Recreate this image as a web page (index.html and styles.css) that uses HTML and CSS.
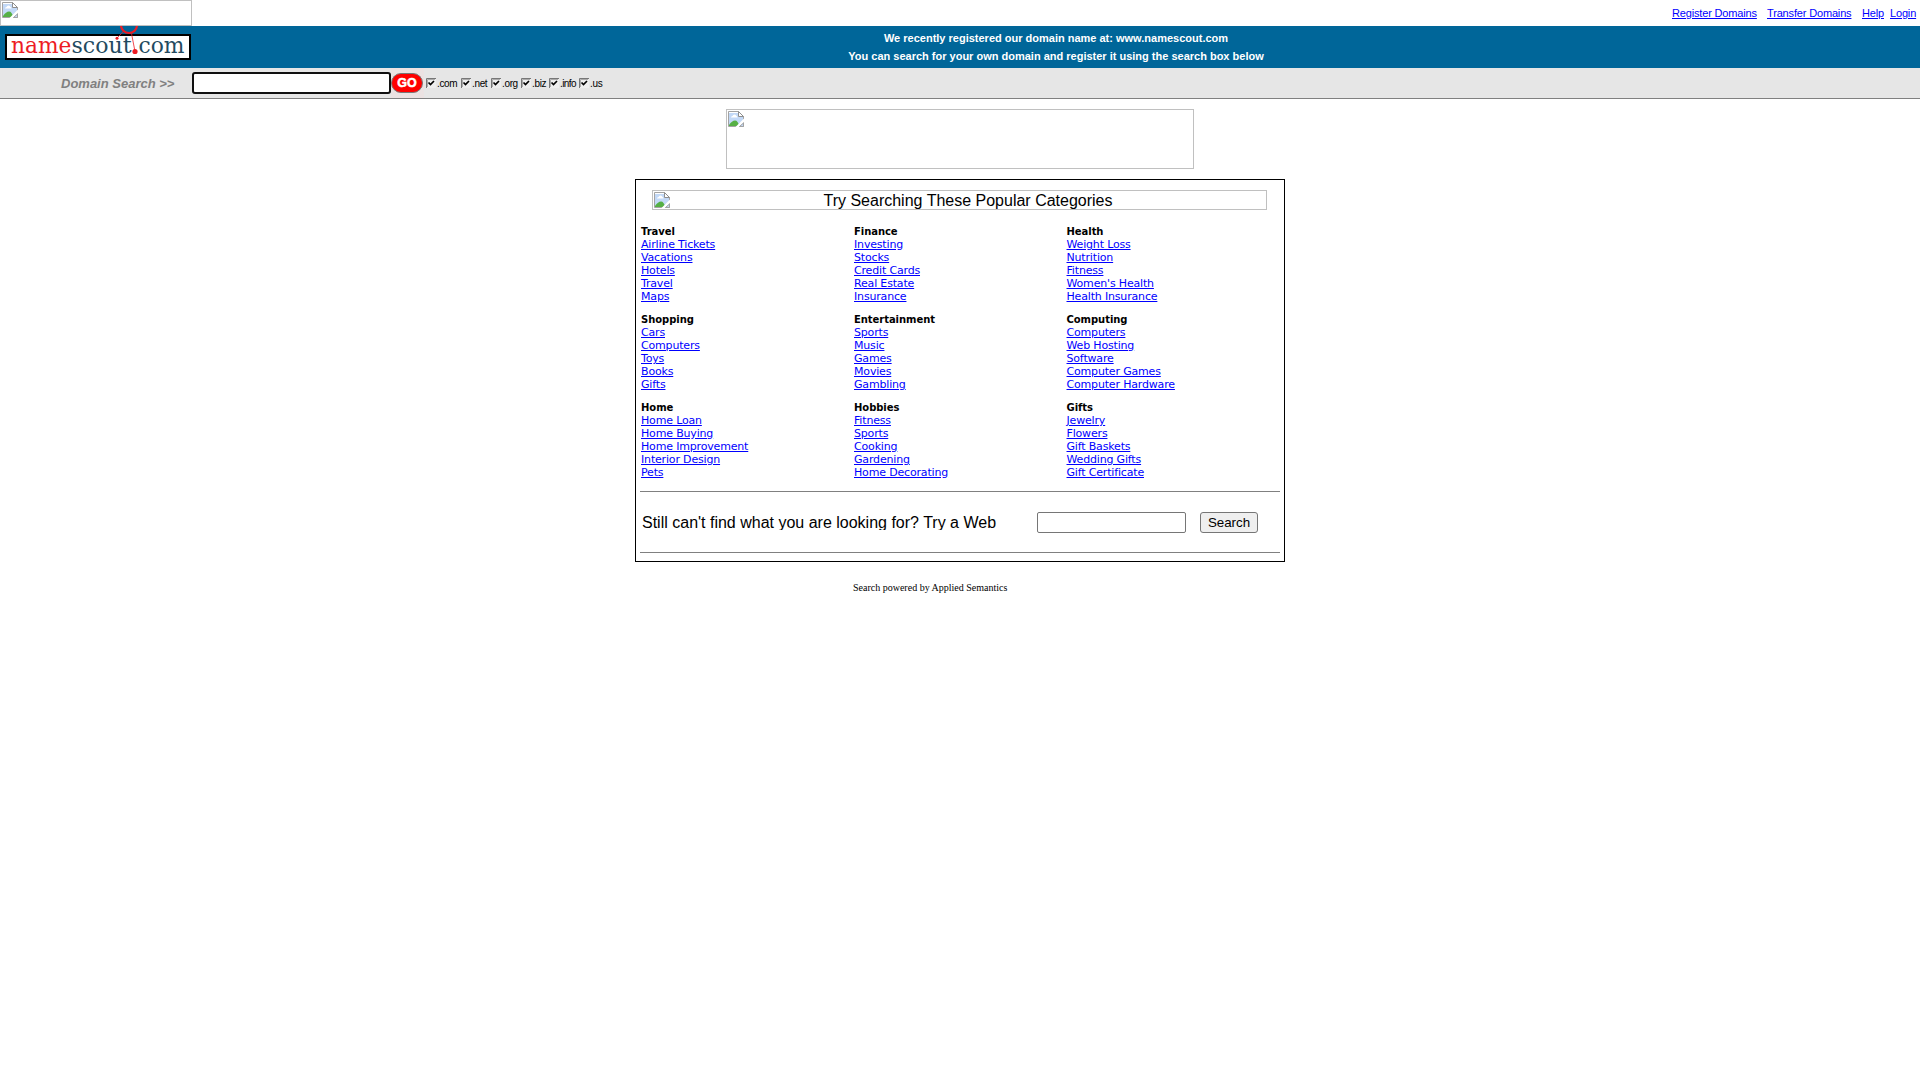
FILE: index.html
```html
<!DOCTYPE html>
<html lang="en">
<head>
<meta charset="utf-8">
<title>namescout.com</title>
<link rel="stylesheet" href="styles.css">
</head>
<body>
<svg width="0" height="0" class="defs">
  <symbol id="broken" viewBox="0 0 16 16">
    <path d="M.5.5h10l5 5v10H.5z" fill="#c3d9f7" stroke="#a3a3a3"/>
    <path d="M1 1h9v1H1z" fill="#fff"/>
    <path d="M3 6.5q0-1.5 1.500-1.500Q5 3.500 6.500 3.500T8.500 5q1 0 1 1.500z" fill="#fff"/>
    <path d="M1 15v-1Q4 9.500 7 9.500t4 5.500z" fill="#56b045"/>
    <path d="M10.500.5v5h5z" fill="#fff" stroke="#8e8e8e"/>
    <path d="M16 7.500L7.500 16H11l5-5z" fill="#fff"/>
    <path d="M11.500 15.500h4V12z" fill="#c3d9f7" stroke="#a3a3a3"/>
  </symbol>
  <symbol id="check" viewBox="0 0 10 10">
    <path d="M0 0h10v10H0z" fill="#eee"/>
    <path d="M.5 10V.5H10" fill="none" stroke="#777"/>
    <path d="M1.500 9V1.500H9" fill="none" stroke="#aaa"/>
    <path d="M2.500 4.500l2 2L8 3" fill="none" stroke="#000" stroke-width="1.700"/>
  </symbol>
</svg>
<header>
  <div class="top">
    <div class="missing top-logo"><svg><use href="#broken"/></svg></div>
    <nav><a class="reg" href="#">Register Domains</a><a class="tra" href="#">Transfer Domains</a><a class="hel" href="#">Help</a><a class="log" href="#">Login</a></nav>
  </div>
  <div class="banner">
    <svg class="brand" width="192" height="42" viewBox="0 0 192 42">
      <rect x="6" y="9" width="184" height="24" fill="#fff" stroke="#000" stroke-width="2"/>
      <text x="11" y="27" textLength="60.500" lengthAdjust="spacingAndGlyphs" fill="#ed1c24">name</text>
      <text x="71.500" y="27" textLength="60" lengthAdjust="spacingAndGlyphs" fill="#234a60">scout</text>
      <text x="138.500" y="27" textLength="46" lengthAdjust="spacingAndGlyphs" fill="#234a60">com</text>
      <g fill="none" stroke="#ed1c24"><path d="M121-1a8 8 0 0 0 16 0" stroke-width="2.200"/><path d="M124 5l-7 7M131.500 7.500l3.500 18" stroke-width=".8"/></g>
      <circle cx="117" cy="12.300" r="1.500" fill="#ed1c24"/><circle cx="135" cy="25.500" r="2.600" fill="#ed1c24"/>
    </svg>
    <div class="notice"><p>We recently registered our domain name at: www.namescout.com</p><p>You can search for your own domain and register it using the search box below</p></div>
  </div>
  <form class="search">
    <label>Domain Search &gt;&gt;</label>
    <input type="text">
    <span class="go"><b>GO</b></span>
    <span class="tlds">
      <span class="com"><svg><use href="#check"/></svg><i>.com</i></span><span class="net"><svg><use href="#check"/></svg><i>.net</i></span><span class="org"><svg><use href="#check"/></svg><i>.org</i></span><span class="biz"><svg><use href="#check"/></svg><i>.biz</i></span><span class="inf"><svg><use href="#check"/></svg><i>.info</i></span><span class="us"><svg><use href="#check"/></svg><i>.us</i></span>
    </span>
  </form>
</header>
<main>
  <div class="missing ad"><svg><use href="#broken"/></svg></div>
  <section class="panel">
    <div class="missing title"><svg><use href="#broken"/></svg><span>Try Searching These Popular Categories</span></div>
    <div class="cats">
      <div><h2>Travel</h2><a href="#">Airline Tickets</a><a href="#">Vacations</a><a href="#">Hotels</a><a href="#">Travel</a><a href="#">Maps</a></div>
      <div><h2>Finance</h2><a href="#">Investing</a><a href="#">Stocks</a><a href="#">Credit Cards</a><a href="#">Real Estate</a><a href="#">Insurance</a></div>
      <div><h2>Health</h2><a href="#">Weight Loss</a><a href="#">Nutrition</a><a href="#">Fitness</a><a href="#">Women's Health</a><a href="#">Health Insurance</a></div>
      <div><h2>Shopping</h2><a href="#">Cars</a><a href="#">Computers</a><a href="#">Toys</a><a href="#">Books</a><a href="#">Gifts</a></div>
      <div><h2>Entertainment</h2><a href="#">Sports</a><a href="#">Music</a><a href="#">Games</a><a href="#">Movies</a><a href="#">Gambling</a></div>
      <div><h2>Computing</h2><a href="#">Computers</a><a href="#">Web Hosting</a><a href="#">Software</a><a href="#">Computer Games</a><a href="#">Computer Hardware</a></div>
      <div><h2>Home</h2><a href="#">Home Loan</a><a href="#">Home Buying</a><a href="#">Home Improvement</a><a href="#">Interior Design</a><a href="#">Pets</a></div>
      <div><h2>Hobbies</h2><a href="#">Fitness</a><a href="#">Sports</a><a href="#">Cooking</a><a href="#">Gardening</a><a href="#">Home Decorating</a></div>
      <div><h2>Gifts</h2><a href="#">Jewelry</a><a href="#">Flowers</a><a href="#">Gift Baskets</a><a href="#">Wedding Gifts</a><a href="#">Gift Certificate</a></div>
    </div>
    <form class="web">
      <span>Still can't find what you are looking for? Try a Web</span>
      <input type="text"><button type="button">Search</button>
    </form>
  </section>
  <footer>Search powered by Applied Semantics</footer>
</main>
</body>
</html>
```
FILE: styles.css
```css
* { box-sizing: border-box; }
body { margin: 0; background: #fff; color: #000; font-family: "Liberation Sans", Arial, sans-serif; }
a { color: #00f; text-decoration: underline; }
p, h2 { margin: 0; }
.defs { display: block; }
.missing { border: 1px solid #c0c0c0; }
.missing svg { display: block; width: 16px; height: 16px; margin: 1px; flex: none; }

.top { display: flex; justify-content: space-between; height: 26px; }
.top-logo { width: 192px; height: 26px; }
.top nav { display: flex; padding-right: 4px; font-size: 11px; line-height: 26px; letter-spacing: -.16px; white-space: nowrap; }
.reg { width: 85px; margin-right: 10px; }
.tra { width: 85px; margin-right: 10px; }
.hel { width: 22px; margin-right: 6px; }
.log { width: 26px; }

.banner { display: flex; height: 42px; background: #069; }
.brand { flex: none; font: 22px "DejaVu Serif", serif; }
.notice { flex: 1; padding-top: 3px; text-align: center; color: #fff; font-weight: bold; font-size: 11px; line-height: 18px; }

.search { display: flex; align-items: center; height: 31px; background: #e6e6e6; border-bottom: 1px solid #808080; }
.search label { width: 192px; padding-left: 61px; font: italic bold 13px "Liberation Sans", Arial, sans-serif; color: #808080; white-space: nowrap; }
.search input { width: 199px; height: 22px; margin: 0; padding: 0; border: 2px solid #101010; border-radius: 3px; background: #fff; }
.go { width: 33px; height: 30px; padding: 5px 1px 5px 0; background: repeating-conic-gradient(#f3dede 0 25%, #e3e6e6 0 50%) 0 0 / 2px 2px; }
.go b { display: block; height: 20px; border: 1px solid #777; border-radius: 10px; background: #f00; color: #fff; text-align: center; font: 900 12.5px/18px "Liberation Sans", Arial, sans-serif; -webkit-text-stroke: .5px #fff; }
.tlds { display: flex; padding-left: 2px; }
.tlds > span { display: flex; align-items: center; gap: 1px; }
.tlds svg { width: 10px; height: 10px; flex: none; }
.tlds i { padding-top: 1px; font: 10px/12px "Liberation Sans", Arial, sans-serif; letter-spacing: -.35px; }
.com { width: 35px; }
.net { width: 30px; }
.org { width: 30px; }
.biz { width: 28px; }
.inf { width: 30px; }
.inf i { letter-spacing: -.6px; }

main { display: flex; flex-direction: column; align-items: center; padding-top: 10px; }
.ad { width: 468px; height: 60px; }
.panel { width: 650px; height: 383px; margin-top: 10px; padding: 10px 4px 0; border: 1px solid #000; }
.title { display: flex; width: 615px; height: 20px; margin-left: 12px; font-size: 16px; line-height: 20px; }
.title span { flex: 1; text-align: center; padding-right: 1px; }
.cats { display: grid; grid-template-columns: 213px 212.5px 1fr; row-gap: 10px; margin-top: 15px; padding-left: 1px; font: 11px/13px "DejaVu Sans", Verdana, sans-serif; letter-spacing: -.17px; }
.cats h2 { font-size: 10px; line-height: 14px; height: 13px; letter-spacing: -.05px; }
.cats a { display: block; width: max-content; }
.web { display: flex; align-items: center; height: 62px; margin-top: 12px; padding-left: 2px; border: solid #808080; border-width: 1px 0; }
.web span { width: 395px; height: 16px; overflow: hidden; white-space: nowrap; font-size: 16px; line-height: 18px; }
.web input { width: 149px; height: 21px; margin: 0 14px 0 0; padding: 0; border: 1px solid #767676; border-radius: 2px; background: #fff; }
.web button { width: 58px; height: 21px; padding: 0; border: 1px solid #767676; border-radius: 3px; background: #efefef; color: #000; font: 13.333px "Liberation Sans", Arial, sans-serif; }
footer { width: 214px; margin-top: 20px; font: 10px/12px "Liberation Serif", "Times New Roman", serif; white-space: nowrap; }
```
